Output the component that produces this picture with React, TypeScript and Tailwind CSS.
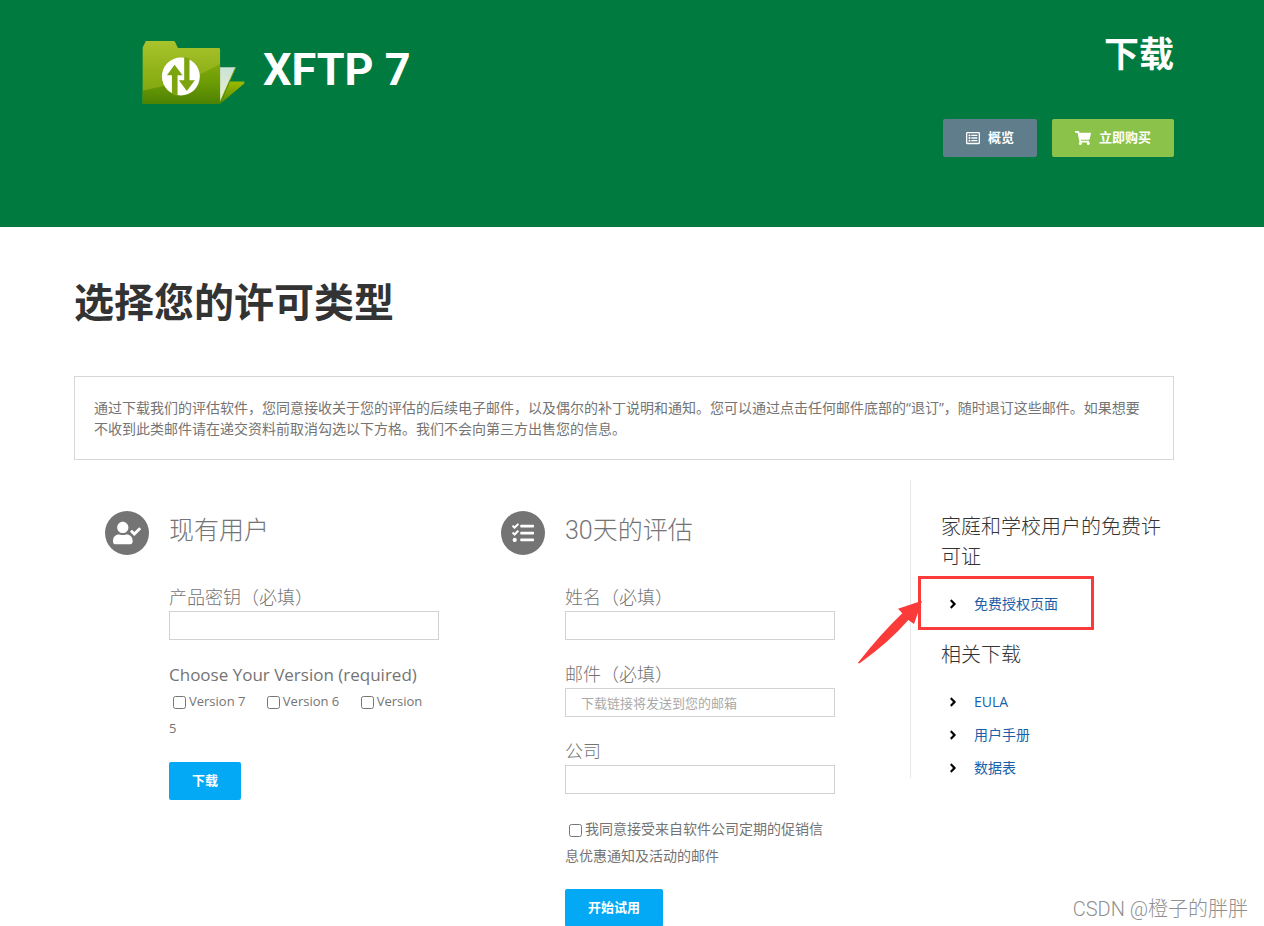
import type { ReactNode } from "react";
import {
  FaAngleRight,
  FaRegListAlt,
  FaShoppingCart,
  FaTasks,
  FaUserCheck,
} from "react-icons/fa";

const versions = ["Version 7", "Version 6", "Version 5"];

const downloads = ["EULA", "用户手册", "数据表"];

function Logo() {
  return (
    <svg
      viewBox="35 44 310 194"
      className="h-[65px] w-[103px]"
      aria-hidden="true"
    >
      <defs>
        <linearGradient id="folder" x1="0" y1="0" x2="0" y2="1">
          <stop offset="0" stopColor="#a9c32c" />
          <stop offset="0.6" stopColor="#8aae14" />
          <stop offset="1" stopColor="#7aa010" />
        </linearGradient>
        <linearGradient id="shade" x1="0" y1="0" x2="0" y2="1">
          <stop offset="0" stopColor="#82a90c" />
          <stop offset="0.5" stopColor="#6a9a04" />
          <stop offset="1" stopColor="#4c8203" />
        </linearGradient>
        <linearGradient id="flap" x1="0" y1="0" x2="0" y2="1">
          <stop offset="0" stopColor="#9dba00" />
          <stop offset="1" stopColor="#558a00" />
        </linearGradient>
        <linearGradient id="paper" x1="0" y1="0" x2="0" y2="1">
          <stop offset="0" stopColor="#c9e2d8" />
          <stop offset="1" stopColor="#eef0cf" />
        </linearGradient>
      </defs>
      <path d="M300 168H343V174L270 236Z" fill="url(#flap)" />
      <path d="M268 125H317L270 230Z" fill="url(#paper)" />
      <path d="M317 125L270 230" stroke="#7fa300" strokeWidth="3" />
      <path
        d="M48 46H130Q133 46 135 50L143 67H266Q270 67 270 71V236H37V66L45 49Q46 46 48 46Z"
        fill="url(#folder)"
      />
      <path d="M37 195Q180 170 270 115V236H37Z" fill="url(#shade)" />
      <circle cx="152" cy="153" r="57" fill="#fff" />
      <path
        d="M133 118L157 149H142V212L125 206V149H110Z"
        fill="#7ba40f"
      />
      <path
        d="M162 95L178 99V164H194L170 197L146 164H162Z"
        fill="#7ba40f"
      />
    </svg>
  );
}

function SectionHeading({
  icon,
  children,
}: {
  icon: ReactNode;
  children: ReactNode;
}) {
  return (
    <div className="flex gap-5">
      <span className="flex size-11 shrink-0 items-center justify-center rounded-full bg-[#747474] text-white">
        {icon}
      </span>
      <h2 className="text-[25px] leading-9 font-light">{children}</h2>
    </div>
  );
}

interface FieldProps {
  id: string;
  label: string;
  type?: string;
  placeholder?: string;
}

function Field({ id, label, type = "text", placeholder }: FieldProps) {
  return (
    <div>
      <label htmlFor={id} className="block text-lg leading-[27px] font-light">
        {label}
      </label>
      <input
        id={id}
        type={type}
        placeholder={placeholder}
        className="block h-[29px] w-full border border-[#d2d2d2] px-[15px] text-[13px] placeholder:text-[#aaa9a9]"
      />
    </div>
  );
}

function SubmitButton({ children }: { children: ReactNode }) {
  return (
    <button
      type="submit"
      className="mt-5 flex h-[38px] items-center rounded-xs bg-[#03a9f4] px-[23px] text-[13px] font-bold text-white"
    >
      {children}
    </button>
  );
}

function DownloadLink({ children }: { children: ReactNode }) {
  return (
    <a
      href="#"
      className="flex items-center gap-[9px] text-sm leading-[21px] text-[#1b5fa8]"
    >
      <span className="flex w-6 justify-center text-black">
        <FaAngleRight className="size-3.5" />
      </span>
      {children}
    </a>
  );
}

// Red frame and arrow drawn around the free licence link
function Highlight() {
  return (
    <div className="pointer-events-none absolute -top-[17px] -left-[23px] h-[54px] w-44 border-3 border-[#fb3a3a]">
      <svg
        viewBox="0 0 192 192"
        className="absolute top-[21px] -left-[63px] size-16"
        aria-hidden="true"
      >
        <path
          d="M192 2L120 26L133 40Q70 100 0 188Q3 192 6 189Q95 125 151 60L168 72L180 38Z"
          fill="#fb3a3a"
        />
      </svg>
    </div>
  );
}

function App() {
  return (
    <div className="relative min-h-screen bg-white font-['Open_Sans','Noto_Sans_CJK_SC',sans-serif] text-[#747474]">
      <header className="bg-[#007a3e] pr-4 text-white">
        <div className="mx-auto flex max-w-[1100px] justify-between pt-7 pb-[70px]">
          <div className="flex items-start gap-[18px] pt-3 pl-[68px]">
            <Logo />
            <span className="font-['Roboto',sans-serif] text-[45px] leading-[60px] font-bold">
              XFTP 7
            </span>
          </div>
          <div className="flex flex-col items-end">
            <p className="text-[35px] leading-[52px] font-bold">下载</p>
            <div className="mt-[39px] flex gap-[15px] text-[13px] font-bold">
              <button
                type="button"
                className="flex h-[38px] items-center gap-2 rounded-xs bg-[#607d8b] px-[23px]"
              >
                <FaRegListAlt className="size-3.5" />
                概览
              </button>
              <button
                type="button"
                className="flex h-[38px] items-center gap-2 rounded-xs bg-[#8bc34a] px-[23px]"
              >
                <FaShoppingCart className="size-4" />
                立即购买
              </button>
            </div>
          </div>
        </div>
      </header>

      <main className="pr-4">
        <div className="mx-auto max-w-[1100px] pt-[45px]">
          <h1 className="text-[40px] leading-[60px] font-bold text-[#333]">
            选择您的许可类型
          </h1>
          <p className="mt-11 border border-[#d7d7d7] py-5 pr-6 pl-[19px] text-sm leading-[21px]">
            通过下载我们的评估软件，您同意接收关于您的评估的后续电子邮件，以及偶尔的补丁说明和通知。您可以通过点击任何邮件底部的“退订”，随时退订这些邮件。如果想要不收到此类邮件请在递交资料前取消勾选以下方格。我们不会向第三方出售您的信息。
          </p>

          <div className="mt-5 flex items-start">
            <section className="w-[36%] px-[31px] pt-[31px]">
              <SectionHeading icon={<FaUserCheck className="size-7" />}>
                现有用户
              </SectionHeading>
              <form className="mt-[29px] ml-16">
                <Field id="product-key" label="产品密钥（必填）" />
                <fieldset className="mt-[21px]">
                  <legend className="text-[17px] leading-[27px]">
                    Choose Your Version (required)
                  </legend>
                  <div className="text-[13px] leading-[27px]">
                    {versions.map((version) => (
                      <label key={version} className="mr-3.5">
                        <input
                          type="checkbox"
                          className="mr-[3px] ml-1 align-middle"
                        />
                        {version}{" "}
                      </label>
                    ))}
                  </div>
                </fieldset>
                <SubmitButton>下载</SubmitButton>
              </form>
            </section>

            <section className="w-[36%] px-[31px] pt-[31px]">
              <SectionHeading icon={<FaTasks className="size-[22px]" />}>
                <span className="font-['Roboto','Noto_Sans_CJK_SC',sans-serif]">
                  30天的评估
                </span>
              </SectionHeading>
              <form className="mt-[29px] ml-16">
                <div className="flex flex-col gap-[21px]">
                  <Field id="name" label="姓名（必填）" />
                  <Field
                    id="email"
                    label="邮件（必填）"
                    type="email"
                    placeholder="下载链接将发送到您的邮箱"
                  />
                  <Field id="company" label="公司" />
                  <label className="block text-sm leading-[27px]">
                    <input
                      type="checkbox"
                      className="mr-[3px] ml-1 align-middle"
                    />
                    我同意接受来自软件公司定期的促销信息优惠通知及活动的邮件
                  </label>
                </div>
                <SubmitButton>开始试用</SubmitButton>
              </form>
            </section>

            <aside className="ml-[4%] w-[24%] border-l border-[#e7e7e7] pt-8 pl-[30px]">
              <h3 className="text-xl leading-[30px] font-light text-[#333]">
                家庭和学校用户的免费许可证
              </h3>
              <div className="relative mt-[21px]">
                <DownloadLink>免费授权页面</DownloadLink>
                <Highlight />
              </div>
              <h3 className="mt-[26px] text-xl leading-[30px] font-light text-[#333]">
                相关下载
              </h3>
              <ul className="mt-[21px] flex flex-col gap-3">
                {downloads.map((name) => (
                  <li key={name}>
                    <DownloadLink>{name}</DownloadLink>
                  </li>
                ))}
              </ul>
            </aside>
          </div>
        </div>
      </main>

      <p className="absolute right-4 bottom-1 font-['Roboto','Noto_Sans_CJK_SC',sans-serif] text-xl font-light text-[#8f8f8f]">
        CSDN @橙子的胖胖
      </p>
    </div>
  );
}

export default App;
